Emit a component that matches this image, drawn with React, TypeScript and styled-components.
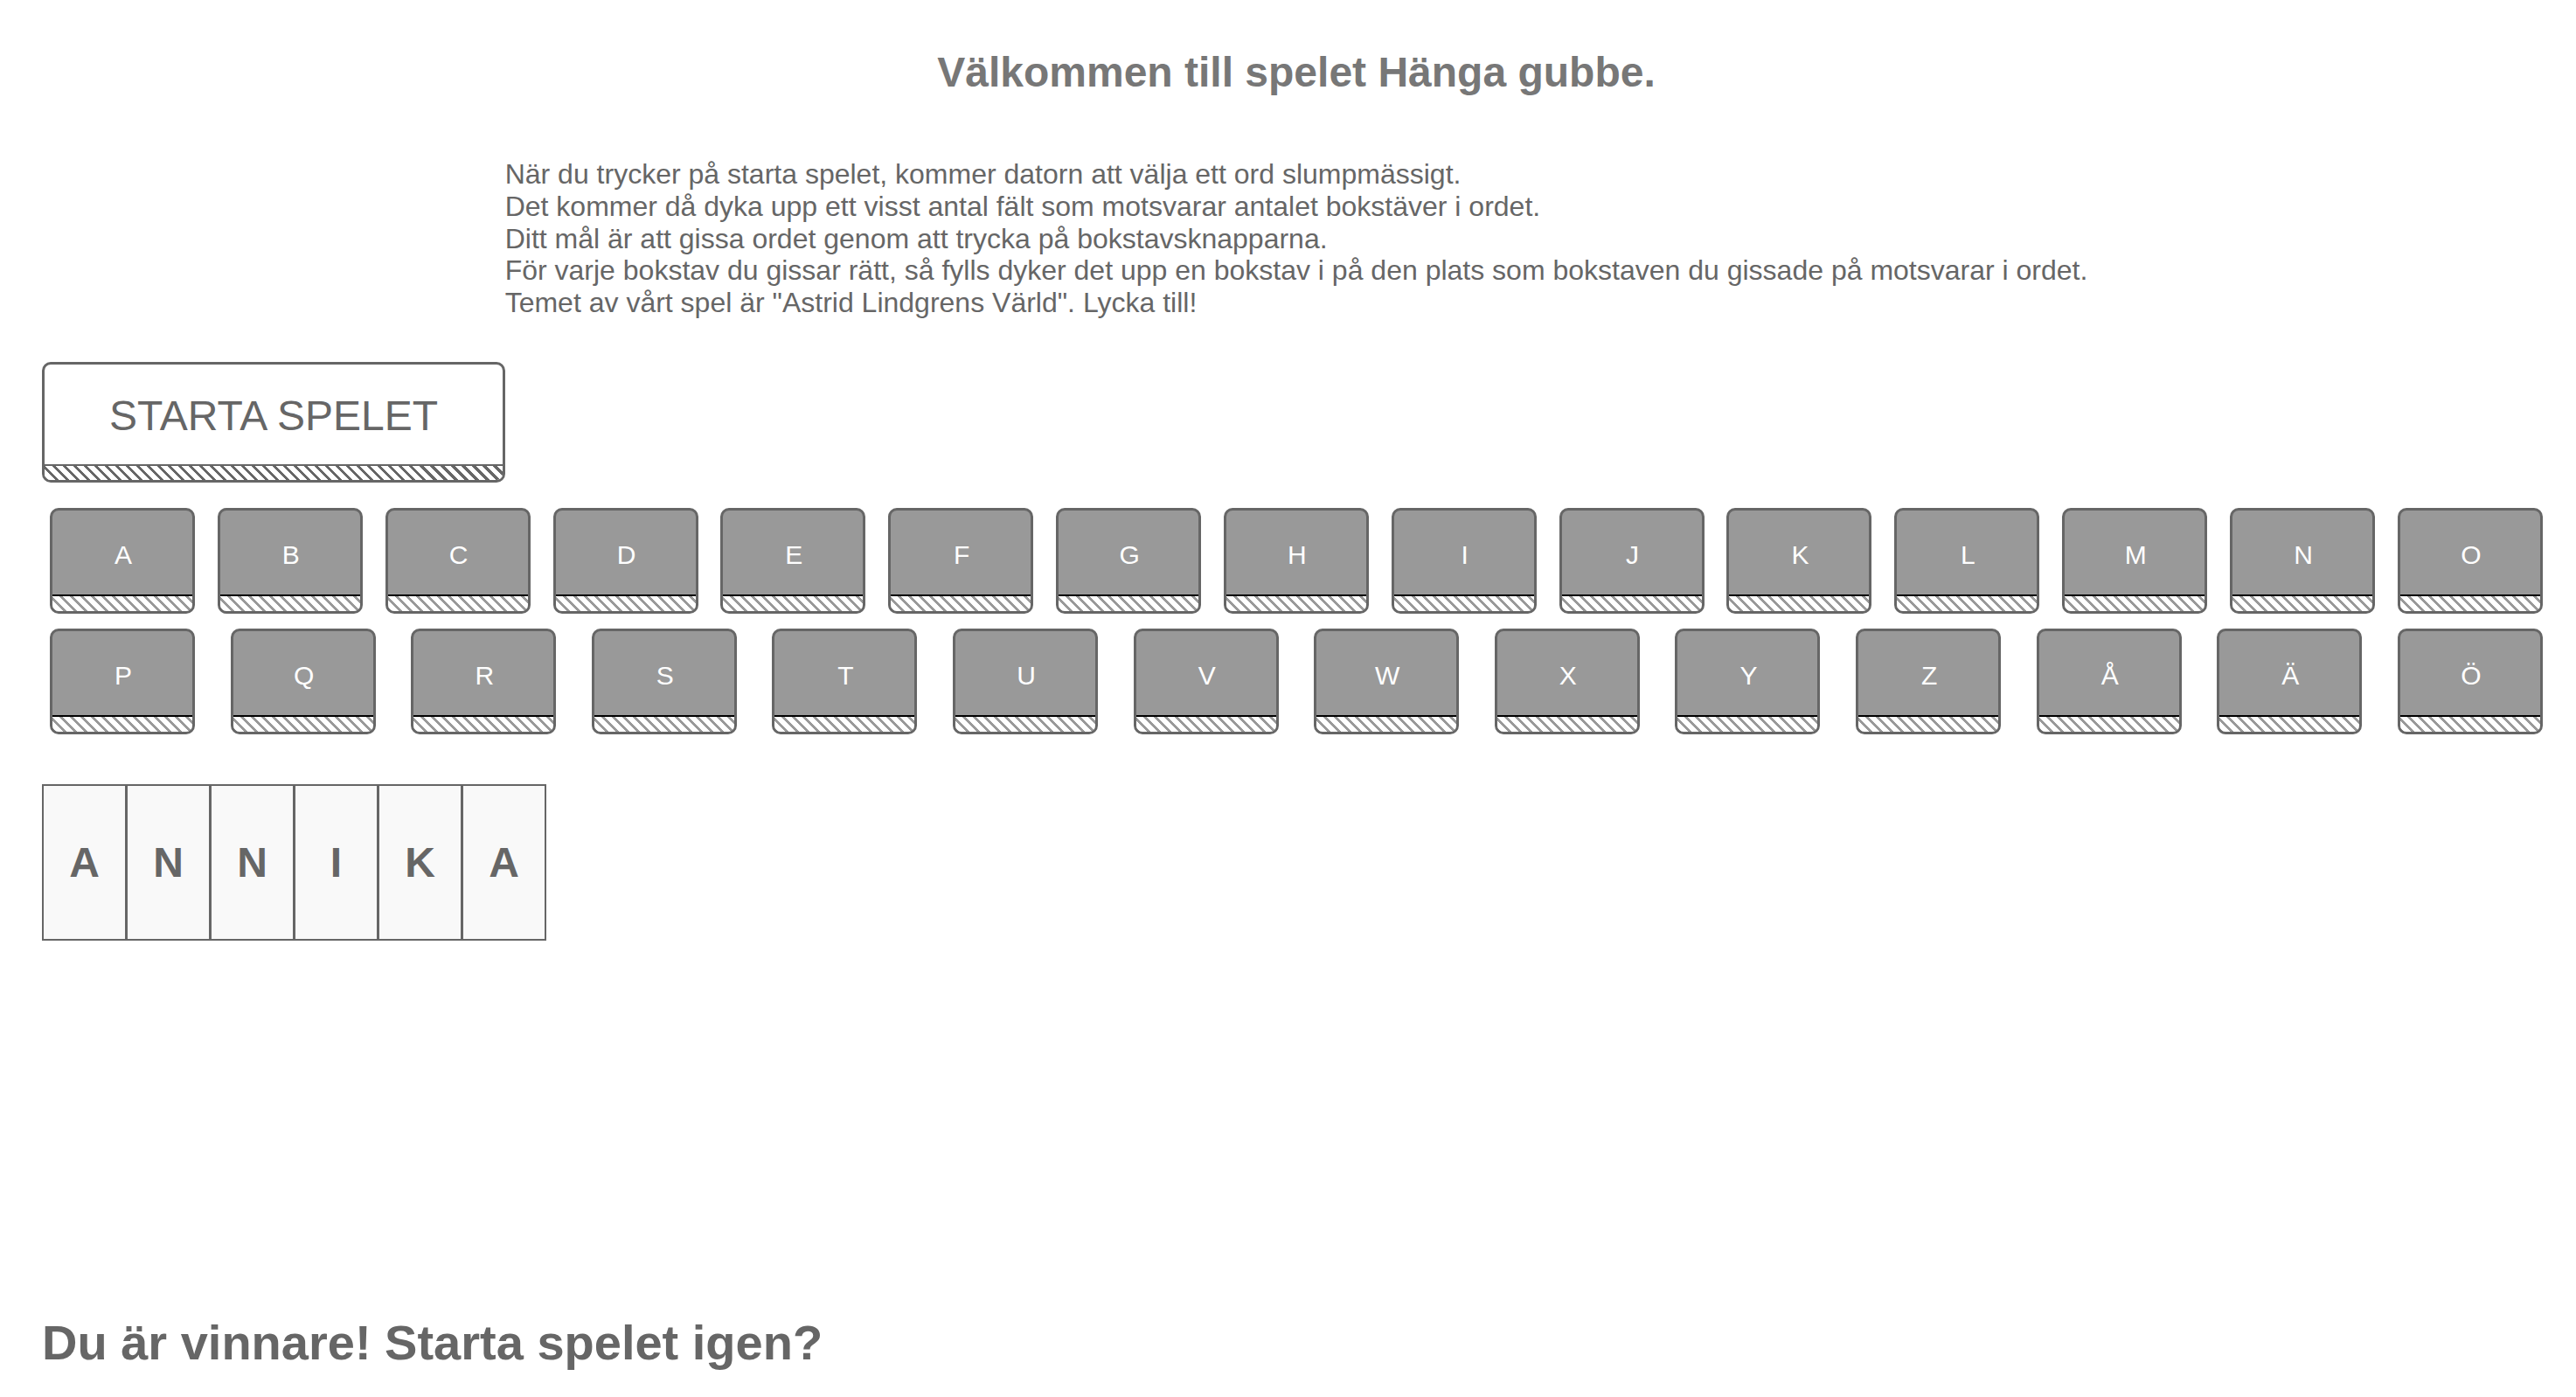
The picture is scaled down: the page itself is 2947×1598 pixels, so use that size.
import React from "react";
import styled, { createGlobalStyle } from "styled-components";

const GlobalStyle = createGlobalStyle`
  html, body {
    margin: 0;
    padding: 0;
    background: #ffffff;
  }
  body {
    font-family: "Liberation Sans", Arial, sans-serif;
    color: #666666;
  }
`;

const Page = styled.div`
  padding: 55px 29px 0 48px;
  box-sizing: border-box;
  width: 2947px;
`;

const Header = styled.header`
  display: flex;
  flex-direction: column;
  align-items: center;
  padding-left: 19px;
  margin-left: -48px;
  margin-right: -29px;
`;

const Title = styled.h1`
  margin: 0;
  font-size: 48px;
  line-height: 55px;
  font-weight: bold;
  color: #777777;
`;

const Intro = styled.p`
  margin: 71px 0 0 0;
  font-size: 32px;
  line-height: 36.8px;
  color: #666666;
  text-align: left;
`;

const hatch = (stripe: string) => `
  repeating-linear-gradient(
    45deg,
    ${stripe} 0px,
    ${stripe} 3px,
    #ffffff 3px,
    #ffffff 8.5px
  )
`;

const StartButton = styled.button`
  display: flex;
  flex-direction: column;
  width: 530px;
  height: 138px;
  margin-top: 49px;
  padding: 0;
  border: 3px solid #666666;
  border-radius: 10px;
  background: #ffffff;
  overflow: hidden;
  cursor: pointer;
  box-sizing: border-box;
`;

const StartLabel = styled.span`
  flex: 1;
  display: flex;
  align-items: center;
  justify-content: center;
  padding-top: 4px;
  font-family: "Liberation Sans", Arial, sans-serif;
  font-size: 48px;
  color: #666666;
`;

const Strip = styled.span<{ $line: string; $stripe: string; $h: number }>`
  display: block;
  height: ${(p) => p.$h}px;
  border-top: 2px solid ${(p) => p.$line};
  background: ${(p) => hatch(p.$stripe)};
`;

const Keyboard = styled.div`
  display: flex;
  flex-direction: column;
  gap: 17px;
  margin-top: 29px;
  padding: 0 9px;
`;

const KeyRow = styled.div`
  display: flex;
  justify-content: space-between;
`;

const Key = styled.button`
  display: flex;
  flex-direction: column;
  width: 166px;
  height: 121px;
  padding: 0;
  border: 3px solid #666666;
  border-radius: 10px;
  background: #999999;
  overflow: hidden;
  cursor: pointer;
  box-sizing: border-box;
`;

const KeyLabel = styled.span`
  flex: 1;
  display: flex;
  align-items: center;
  justify-content: center;
  padding: 6px 0 0 2px;
  font-family: "Liberation Sans", Arial, sans-serif;
  font-size: 30px;
  color: #ffffff;
`;

const WordRow = styled.div`
  display: flex;
  margin-top: 57px;
`;

const LetterBox = styled.div`
  display: flex;
  align-items: center;
  justify-content: center;
  width: 97px;
  height: 179px;
  margin-right: -1px;
  border: 2px solid #666666;
  background: #f9f9f9;
  box-sizing: border-box;
  font-family: "Liberation Sans", Arial, sans-serif;
  font-weight: bold;
  font-size: 48px;
  color: #666666;
`;

const Gallows = styled.div`
  height: 428px;
`;

const Result = styled.h2`
  margin: 0;
  font-size: 56px;
  line-height: 64px;
  font-weight: bold;
  color: #666666;
`;

const row1 = "ABCDEFGHIJKLMNO".split("");
const row2 = "PQRSTUVWXYZÅÄÖ".split("");
const word = "ANNIKA".split("");

export default function App() {
  return (
    <>
      <GlobalStyle />
      <Page>
        <Header>
          <Title>Välkommen till spelet Hänga gubbe.</Title>
          <Intro>
            När du trycker på starta spelet, kommer datorn att välja ett ord slumpmässigt.
            <br />
            Det kommer då dyka upp ett visst antal fält som motsvarar antalet bokstäver i ordet.
            <br />
            Ditt mål är att gissa ordet genom att trycka på bokstavsknapparna.
            <br />
            För varje bokstav du gissar rätt, så fylls dyker det upp en bokstav i på den plats som bokstaven du gissade på motsvarar i ordet.
            <br />
            Temet av vårt spel är "Astrid Lindgrens Värld". Lycka till!
          </Intro>
        </Header>

        <StartButton>
          <StartLabel>STARTA SPELET</StartLabel>
          <Strip $line="#666666" $stripe="#666666" $h={16} />
        </StartButton>

        <Keyboard>
          {[row1, row2].map((row, i) => (
            <KeyRow key={i}>
              {row.map((l) => (
                <Key key={l}>
                  <KeyLabel>{l}</KeyLabel>
                  <Strip $line="#000000" $stripe="#999999" $h={17} />
                </Key>
              ))}
            </KeyRow>
          ))}
        </Keyboard>

        <WordRow>
          {word.map((l, i) => (
            <LetterBox key={i}>{l}</LetterBox>
          ))}
        </WordRow>

        <Gallows />

        <Result>Du är vinnare! Starta spelet igen?</Result>
      </Page>
    </>
  );
}
